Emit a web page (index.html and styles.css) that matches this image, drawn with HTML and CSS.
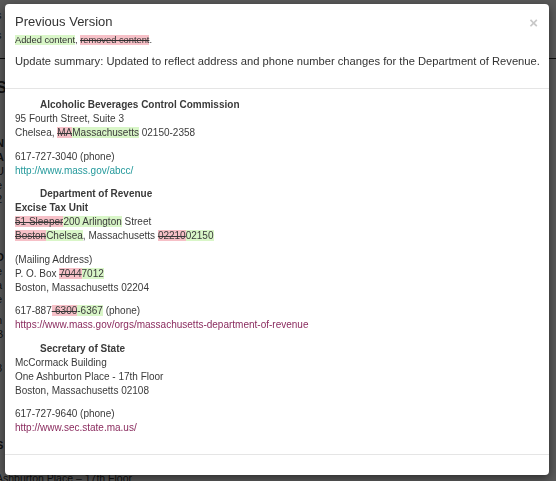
FILE: index.html
```html
<!DOCTYPE html>
<html lang="en">

<head>
    <meta charset="UTF-8">
    <meta name="viewport" content="width=device-width, initial-scale=1.0">
    <title>Previous Version</title>
    <link rel="stylesheet" href="styles.css">
</head>

<body>

    <div class="page">
        <p class="page-meta">s</p>
        <p class="page-meta">s</p>
        <hr class="page-rule">
        <h2 class="page-title">S</h2>
        <p class="block-1"><b>N</b><br><b>A</b><br>U<br>e<br>2<br><a href="#">/</a></p>
        <p class="block-2"><b>D</b><br>e<br>a<br>e</p>
        <p class="block-3">n<br>B<br>r</p>
        <p class="block-4">8<br><a href="#" class="visited">/</a></p>
        <p class="block-5"><b>S</b><br>r</p>
        <p class="block-6">Ashburton Place – 17th Floor</p>
    </div>

    <div class="backdrop"></div>

    <div class="modal">
        <div class="modal-header">
            <span class="close">&times;</span>
            <h4 class="modal-title">Previous Version</h4>
            <p class="legend"><ins>Added content</ins>, <del>removed content</del>.</p>
            <p class="summary">Update summary: Updated to reflect address and phone number changes for the Department of Revenue.</p>
        </div>

        <div class="modal-body">
            <p><strong class="indent">Alcoholic Beverages Control Commission</strong><br>
                95 Fourth Street, Suite 3<br>
                Chelsea, <del>MA</del><ins>Massachusetts</ins> 02150-2358</p>

            <p>617-727-3040 (phone)<br>
                <a href="#" class="link">http://www.mass.gov/abcc/</a></p>

            <p><strong class="indent">Department of Revenue</strong><br>
                <strong>Excise Tax Unit</strong><br>
                <del>51 Sleeper</del><ins>200 Arlington</ins> Street<br>
                <del>Boston</del><ins>Chelsea</ins>, Massachusetts <del>02210</del><ins>02150</ins></p>

            <p>(Mailing Address)<br>
                P. O. Box <del>7044</del><ins>7012</ins><br>
                Boston, Massachusetts 02204</p>

            <p>617-887<del>-6300</del><ins>-6367</ins> (phone)<br>
                <a href="#" class="link visited">https://www.mass.gov/orgs/massachusetts-department-of-revenue</a></p>

            <p><strong class="indent">Secretary of State</strong><br>
                McCormack Building<br>
                One Ashburton Place - 17th Floor<br>
                Boston, Massachusetts 02108</p>

            <p>617-727-9640 (phone)<br>
                <a href="#" class="link visited">http://www.sec.state.ma.us/</a></p>
        </div>

        <div class="modal-footer"></div>
    </div>

</body>

</html>
```

FILE: styles.css
```css
body {
    font-family: 'Helvetica Neue', Helvetica, 'Liberation Sans', Arial, sans-serif;
    margin: 0;
    background-color: #fff;
    color: #333;
    overflow: hidden;
}

/* page behind the dialog */
.page {
    margin-left: -4px;
    padding-top: 8px;
    font-size: 11px;
    line-height: 14px;
    color: #333;
}

.page p {
    margin: 0;
}

.page-meta {
    height: 20px;
}

.page-rule {
    border: none;
    border-top: 1px solid #222;
    margin: 10px 0 0;
}

.page-title {
    margin: 19px 0 0;
    font-size: 16px;
    line-height: 20px;
}

.page .block-1 {
    margin-top: 38px;
}

.page .block-2 {
    margin-top: 30px;
}

.page .block-3 {
    margin-top: 7px;
}

.page .block-4 {
    margin-top: 6px;
}

.page .block-5 {
    margin-top: 49px;
}

.page .block-6 {
    margin-top: 5px;
    font-size: 10.5px;
}

.page a {
    color: #1a8a8e;
    text-decoration: none;
}

.page a.visited {
    color: #8a2b5e;
}

.backdrop {
    position: fixed;
    top: 0;
    left: 0;
    right: 0;
    bottom: 0;
    background-color: rgba(0, 0, 0, 0.65);
}

.modal {
    position: fixed;
    top: 4px;
    left: 5px;
    width: 544px;
    background-color: #fff;
    border-radius: 4px;
    box-shadow: 0 3px 10px rgba(0, 0, 0, 0.5);
}

.modal-header {
    position: relative;
    padding: 10px 10px 12px;
    border-bottom: 1px solid #e5e5e5;
}

.close {
    position: absolute;
    top: 11px;
    right: 11px;
    font-size: 15px;
    font-weight: bold;
    line-height: 15px;
    color: #c8c8c8;
}

.modal-title {
    margin: 0;
    font-size: 13px;
    font-weight: 500;
    line-height: 16px;
    color: #333;
}

.legend {
    margin: 3px 0 0;
    font-size: 9.3px;
    line-height: 14px;
}

.summary {
    margin: 6px 0 7px;
    font-size: 11.2px;
    line-height: 16px;
    white-space: nowrap;
}

ins {
    text-decoration: none;
    background-color: #d9f6c8;
}

del {
    background-color: #f6c0c7;
}

.modal-body {
    padding: 9px 10px 9px;
    font-size: 10px;
    line-height: 14px;
    color: #3a3a3a;
}

.modal-body p {
    margin: 0 0 9.5px;
}

.indent {
    padding-left: 25px;
}

.link {
    color: #23999b;
    text-decoration: none;
}

.link.visited {
    color: #8a2b5e;
}

.modal-footer {
    height: 20px;
    border-top: 1px solid #e5e5e5;
}
```
